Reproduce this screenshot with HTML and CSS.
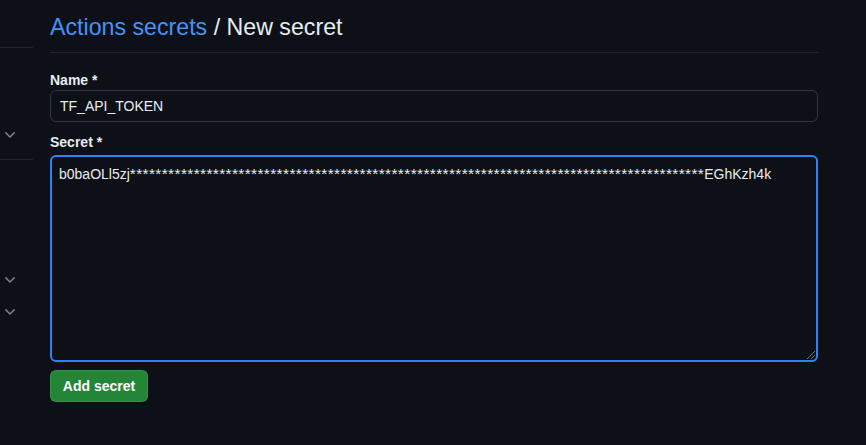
FILE: index.html
```html
<!DOCTYPE html>
<html lang="en">
<head>
<meta charset="utf-8">
<title>New secret</title>
<link rel="stylesheet" href="styles.css">
</head>
<body>
<div class="layout">
  <aside class="sidebar">
    <div class="nav-top"></div>
    <div class="nav-group">
      <div class="nav-row"><svg class="chev" viewBox="0 0 16 16" width="16" height="16"><path d="M12.78 5.22a.749.749 0 0 1 0 1.06l-4.25 4.25a.749.749 0 0 1-1.06 0L3.22 6.28a.749.749 0 1 1 1.06-1.06L8 8.94l3.72-3.72a.749.749 0 0 1 1.06 0Z"/></svg></div>
    </div>
    <div class="nav-group2">
      <div class="nav-row"><svg class="chev" viewBox="0 0 16 16" width="16" height="16"><path d="M12.78 5.22a.749.749 0 0 1 0 1.06l-4.25 4.25a.749.749 0 0 1-1.06 0L3.22 6.28a.749.749 0 1 1 1.06-1.06L8 8.94l3.72-3.72a.749.749 0 0 1 1.06 0Z"/></svg></div>
      <div class="nav-row"><svg class="chev" viewBox="0 0 16 16" width="16" height="16"><path d="M12.78 5.22a.749.749 0 0 1 0 1.06l-4.25 4.25a.749.749 0 0 1-1.06 0L3.22 6.28a.749.749 0 1 1 1.06-1.06L8 8.94l3.72-3.72a.749.749 0 0 1 1.06 0Z"/></svg></div>
    </div>
  </aside>
  <main class="content">
    <h2 class="title"><a class="title-link" href="#">Actions secrets</a> / New secret</h2>
    <form class="form">
      <div class="group">
        <label class="label" for="name">Name *</label>
        <div class="input" id="name">TF_API_TOKEN</div>
      </div>
      <div class="group">
        <label class="label" for="secret">Secret *</label>
        <div class="textarea" id="secret"><span>b0baOLl5zj</span><span class="stars">******************************************************************************************</span><span>EGhKzh4k</span><span class="grip"></span></div>
      </div>
      <button type="button" class="btn">Add secret</button>
    </form>
  </main>
</div>
</body>
</html>
```
FILE: styles.css
```css
* { box-sizing: border-box; }
html, body { margin: 0; padding: 0; }
body {
  background: #0d1117;
  color: #e6edf3;
  font-family: "Liberation Sans", Arial, sans-serif;
  font-size: 14px;
  line-height: 20px;
  width: 866px;
  height: 445px;
  overflow: hidden;
}
.layout { display: flex; }
.sidebar { width: 33px; margin-right: 17px; flex: none; }
.nav-top { height: 48px; border-bottom: 1px solid #21262d; }
.nav-group { padding-top: 71px; padding-bottom: 8px; border-bottom: 1px solid #21262d; }
.nav-group2 { padding-top: 104px; }
.nav-row { height: 32px; display: flex; align-items: center; padding-left: 2px; }
.chev { fill: #7d8590; }
.content { width: 768px; flex: none; }
.title {
  margin: 12px 0 0;
  font-size: 23.2px;
  line-height: 30px;
  font-weight: 400;
  padding-bottom: 10px;
  border-bottom: 1px solid #21262d;
  color: #e6edf3;
}
.title-link { color: #4493f8; text-decoration: none; }
.form { padding-top: 17px; }
.group { margin-bottom: 10px; }
.label { display: block; font-weight: 700; font-size: 14px; line-height: 20px; }
.input {
  height: 32px;
  border: 1px solid #30363d;
  border-radius: 6px;
  padding: 0 9px;
  line-height: 30px;
  color: #e6edf3;
}
.textarea {
  position: relative;
  margin-top: 3px;
  height: 207px;
  border: 2px solid #2f81f7;
  border-radius: 6px;
  padding: 7px 7px;
  color: #e6edf3;
  white-space: nowrap;
}
.stars { font-size: 15.5px; letter-spacing: 0.35px; }
.grip {
  position: absolute;
  right: 1px;
  bottom: 1px;
  width: 10px;
  height: 10px;
  background: repeating-linear-gradient(135deg, transparent 0 2px, #6e7681 2px 3px);
  clip-path: polygon(100% 0, 100% 100%, 0 100%);
}
.btn {
  margin-top: -2px;
  height: 32px;
  width: 98px;
  border: 1px solid rgba(240,246,252,0.1);
  border-radius: 6px;
  background: #238636;
  color: #ffffff;
  font-family: "Liberation Sans", Arial, sans-serif;
  font-weight: 700;
  font-size: 14px;
  padding: 0;
}
```
